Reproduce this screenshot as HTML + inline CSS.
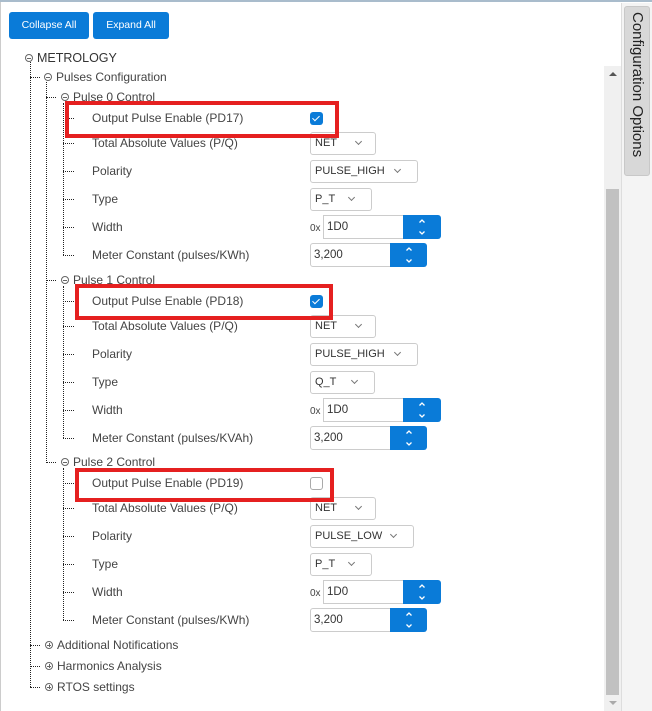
<!DOCTYPE html>
<html><head><style>
*{box-sizing:border-box;margin:0;padding:0}
body{width:652px;height:711px;overflow:hidden;background:#fff;font-family:"Liberation Sans",sans-serif;font-size:12px;color:#444;position:relative}
.a{position:absolute}
.btn{position:absolute;top:12px;height:27px;background:#0a7bd8;color:#fff;border-radius:3px;font-size:10.5px;line-height:27px;text-align:center}
.t{position:absolute;white-space:nowrap;line-height:14px}
.v{position:absolute;border-left:1px dotted #222;width:0}
.h{position:absolute;border-top:1px dotted #222;height:0}
.sel{position:absolute;height:23px;border:1px solid #ccc;border-radius:3px;background:#fff;padding-left:4px;line-height:21px;font-size:11px;color:#333}
.sel i{position:absolute;top:6px;width:5px;height:5px;border-right:1px solid #777;border-bottom:1px solid #777;transform:rotate(45deg)}
.inp{position:absolute;height:24px;border:1px solid #ccc;background:#fff;padding-left:3px;line-height:22px;font-size:11.5px;color:#333}
.sp{position:absolute;height:24px;background:#0a7bd8;border-radius:0 3px 3px 0}
.sp svg{position:absolute;left:50%;top:3px;margin-left:-4px}
.cb{position:absolute;width:13px;height:13px;border-radius:3px}
.red{position:absolute;border:4px solid #e52020}
.circ{display:inline-block;width:8px;height:8px;border:1px solid #666;border-radius:50%;position:relative;margin-right:4px;vertical-align:0px}
.circ:after{content:"";position:absolute;left:1px;top:3px;width:4px;border-top:1px solid #666}
.circ.p:before{content:"";position:absolute;left:3px;top:1px;height:4px;border-left:1px solid #666}
</style></head><body>
<div class="a" style="left:0;top:0;width:652px;height:2px;background:#a9bccc"></div>
<div class="a" style="left:0;top:2px;width:1px;height:709px;background:#ccc"></div>
<div class="btn" style="left:9px;width:80px">Collapse All</div>
<div class="btn" style="left:93px;width:76px">Expand All</div>
<div class="a" style="left:604px;top:66px;width:17px;height:645px;background:#f0f0f0"></div>
<div class="a" style="left:606px;top:189px;width:13px;height:506px;background:#c1c1c1"></div>
<div class="a" style="left:609px;top:72px;border:4px solid transparent;border-bottom:4px solid #555;border-top:0"></div>
<div class="a" style="left:609px;top:701px;border:4px solid transparent;border-top:4px solid #aaa;border-bottom:0"></div>
<div class="a" style="left:621px;top:3px;width:31px;height:708px;background:#f4f4f4;border-left:1px solid #ddd"></div>
<div class="a" style="left:624px;top:6px;width:26px;height:170px;background:#d8d8d8;border-radius:3px;border:1px solid #c8c8c8"></div>
<div class="a" style="left:626px;top:12px;width:22px;height:160px;writing-mode:vertical-rl;font-size:15px;color:#222;line-height:22px">Configuration Options</div>
<div class="t" style="left:25px;top:51px;font-size:12.5px;color:#333"><span class="circ"></span>METROLOGY</div>
<div id="tree"></div>
<script>
var o='';
var SP='<svg width="8" height="18" viewBox="0 0 8 18"><path d="M1.5 4.5L4 2L6.5 4.5M1.5 13.5L4 16L6.5 13.5" fill="none" stroke="#fff" stroke-width="1.3"/></svg>';
function v(x,y1,y2){o+='<div class="v" style="left:'+x+'px;top:'+y1+'px;height:'+(y2-y1)+'px"></div>'}
function h(x1,x2,y){o+='<div class="h" style="left:'+x1+'px;top:'+y+'px;width:'+(x2-x1)+'px"></div>'}
function t(x,y,s,st){o+='<div class="t" style="left:'+x+'px;top:'+(y-7)+'px;'+(st||'')+'">'+s+'</div>'}
v(30,62,687);v(46,82,463);
h(30,40,77);t(44,77,'<span class="circ"></span>Pulses Configuration');
var secs=[[97,'Pulse 0 Control','PD17',true,'NET','PULSE_HIGH','P_T','KWh',[65,101,274,37]],
[280,'Pulse 1 Control','PD18',true,'NET','PULSE_HIGH','Q_T','KVAh',[75,284,258,36]],
[462,'Pulse 2 Control','PD19',false,'NET','PULSE_LOW','P_T','KWh',[75,468,259,34]]];
secs.forEach(function(s){
 var y=s[0];h(46,56,y);t(61,y,'<span class="circ"></span>'+s[1]);
 var r=[y+21,y+46,y+74,y+102,y+130,y+158];
 v(63,y+6,r[5]);
 var labs=['Output Pulse Enable ('+s[2]+')','Total Absolute Values (P/Q)','Polarity','Type','Width','Meter Constant (pulses/'+s[7]+')'];
 r.forEach(function(c,i){h(63,74,c);t(92,c,labs[i]);});
 var c=r[0];
 o+='<div class="cb" style="left:310px;top:'+(c-6)+'px;'+(s[3]?'background:#0a7bd8':'border:1px solid #aaa;background:#fff')+'">'+(s[3]?'<div style="position:absolute;left:4px;top:2px;width:4px;height:7px;border-right:1.5px solid #fff;border-bottom:1.5px solid #fff;transform:rotate(45deg)"></div>':'')+'</div>';
 c=r[1];o+='<div class="sel" style="left:310px;top:'+(c-11)+'px;width:66px">'+s[4]+'<i style="left:45px"></i></div>';
 var w=s[5]=='PULSE_LOW'?104:108;
 c=r[2];o+='<div class="sel" style="left:310px;top:'+(c-11)+'px;width:'+w+'px">'+s[5]+'<i style="left:'+(w-24)+'px"></i></div>';
 c=r[3];var w2=s[6]=='Q_T'?65:62;o+='<div class="sel" style="left:310px;top:'+(c-11)+'px;width:'+w2+'px">'+s[6]+'<i style="left:'+(w2-24)+'px"></i></div>';
 c=r[4];o+='<div class="t" style="left:310px;top:'+(c-5)+'px;font-size:10px">0x</div><div class="inp" style="left:323px;top:'+(c-12)+'px;width:81px">1D0</div><div class="sp" style="left:403px;top:'+(c-12)+'px;width:38px">'+SP+'</div>';
 c=r[5];o+='<div class="inp" style="left:310px;top:'+(c-12)+'px;width:81px;border-radius:3px 0 0 3px">3,200</div><div class="sp" style="left:390px;top:'+(c-12)+'px;width:37px">'+SP+'</div>';
 var b=s[8];o+='<div class="red" style="left:'+b[0]+'px;top:'+b[1]+'px;width:'+b[2]+'px;height:'+b[3]+'px"></div>';
});
[[645,'Additional Notifications'],[666,'Harmonics Analysis'],[687,'RTOS settings']].forEach(function(a){h(30,40,a[0]);t(45,a[0],'<span class="circ p"></span>'+a[1]);});
document.getElementById('tree').innerHTML=o;
</script>
</body></html>
